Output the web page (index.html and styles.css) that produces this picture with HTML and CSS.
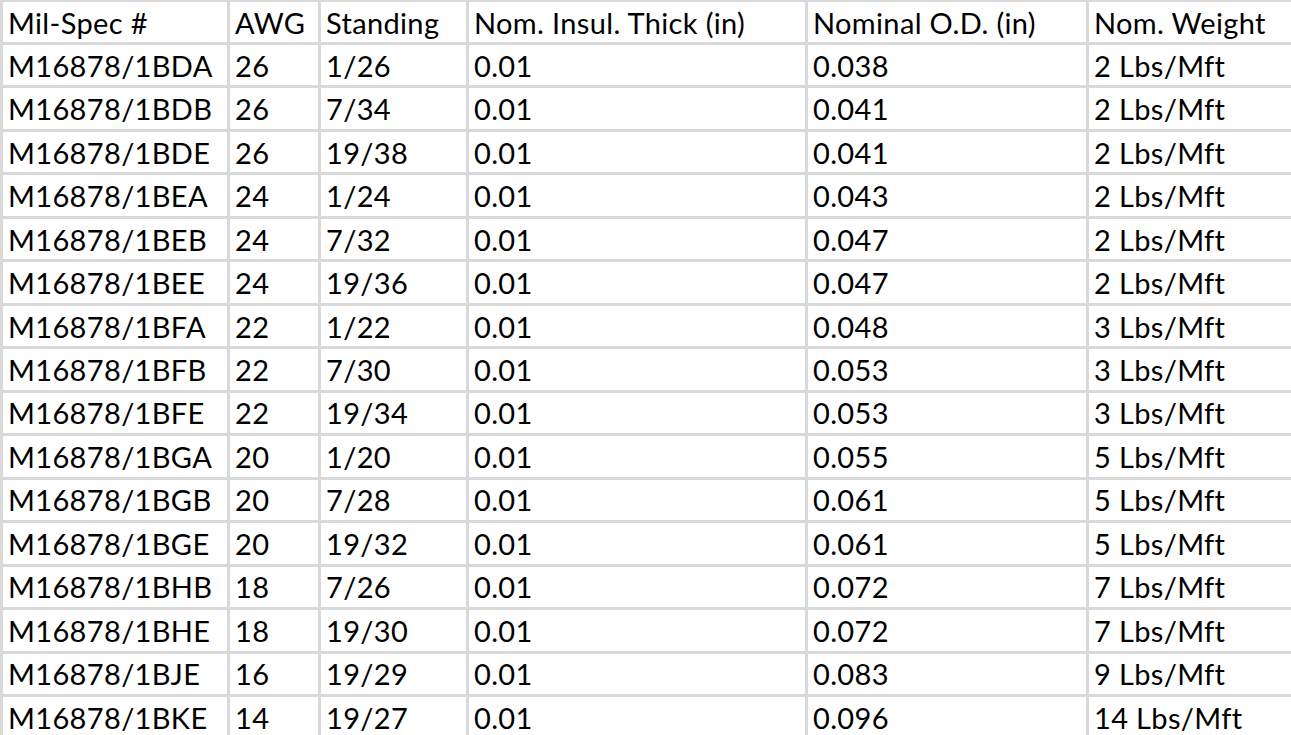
FILE: index.html
```html
<!DOCTYPE html>
<html>
<head>
<meta charset="utf-8">
<link rel="stylesheet" href="styles.css">
</head>
<body>
<div class="sheet">
  <div class="c">Mil-Spec #</div><div class="c">AWG</div><div class="c">Standing</div><div class="c">Nom. Insul. Thick (in)</div><div class="c">Nominal O.D. (in)</div><div class="c">Nom. Weight</div>
  <div class="c">M16878/1BDA</div><div class="c">26</div><div class="c">1/26</div><div class="c">0.01</div><div class="c">0.038</div><div class="c">2 Lbs/Mft</div>
  <div class="c">M16878/1BDB</div><div class="c">26</div><div class="c">7/34</div><div class="c">0.01</div><div class="c">0.041</div><div class="c">2 Lbs/Mft</div>
  <div class="c">M16878/1BDE</div><div class="c">26</div><div class="c">19/38</div><div class="c">0.01</div><div class="c">0.041</div><div class="c">2 Lbs/Mft</div>
  <div class="c">M16878/1BEA</div><div class="c">24</div><div class="c">1/24</div><div class="c">0.01</div><div class="c">0.043</div><div class="c">2 Lbs/Mft</div>
  <div class="c">M16878/1BEB</div><div class="c">24</div><div class="c">7/32</div><div class="c">0.01</div><div class="c">0.047</div><div class="c">2 Lbs/Mft</div>
  <div class="c">M16878/1BEE</div><div class="c">24</div><div class="c">19/36</div><div class="c">0.01</div><div class="c">0.047</div><div class="c">2 Lbs/Mft</div>
  <div class="c">M16878/1BFA</div><div class="c">22</div><div class="c">1/22</div><div class="c">0.01</div><div class="c">0.048</div><div class="c">3 Lbs/Mft</div>
  <div class="c">M16878/1BFB</div><div class="c">22</div><div class="c">7/30</div><div class="c">0.01</div><div class="c">0.053</div><div class="c">3 Lbs/Mft</div>
  <div class="c">M16878/1BFE</div><div class="c">22</div><div class="c">19/34</div><div class="c">0.01</div><div class="c">0.053</div><div class="c">3 Lbs/Mft</div>
  <div class="c">M16878/1BGA</div><div class="c">20</div><div class="c">1/20</div><div class="c">0.01</div><div class="c">0.055</div><div class="c">5 Lbs/Mft</div>
  <div class="c">M16878/1BGB</div><div class="c">20</div><div class="c">7/28</div><div class="c">0.01</div><div class="c">0.061</div><div class="c">5 Lbs/Mft</div>
  <div class="c">M16878/1BGE</div><div class="c">20</div><div class="c">19/32</div><div class="c">0.01</div><div class="c">0.061</div><div class="c">5 Lbs/Mft</div>
  <div class="c">M16878/1BHB</div><div class="c">18</div><div class="c">7/26</div><div class="c">0.01</div><div class="c">0.072</div><div class="c">7 Lbs/Mft</div>
  <div class="c">M16878/1BHE</div><div class="c">18</div><div class="c">19/30</div><div class="c">0.01</div><div class="c">0.072</div><div class="c">7 Lbs/Mft</div>
  <div class="c">M16878/1BJE</div><div class="c">16</div><div class="c">19/29</div><div class="c">0.01</div><div class="c">0.083</div><div class="c">9 Lbs/Mft</div>
  <div class="c">M16878/1BKE</div><div class="c">14</div><div class="c">19/27</div><div class="c">0.01</div><div class="c">0.096</div><div class="c">14 Lbs/Mft</div>
</div>
</body>
</html>
```
FILE: styles.css
```css
html, body {
  margin: 0;
  padding: 0;
  background: #ffffff;
  overflow: hidden;
}
.sheet {
  display: grid;
  grid-template-columns: 224px 88px 145px 336px 278px 1fr;
  grid-template-rows: 40px repeat(16, 40.47px);
  gap: 3px;
  padding: 2px 0 0 3px;
  background: #d9d9d9;
  width: 1291px;
  box-sizing: border-box;
  font-family: Lato, "Open Sans", sans-serif;
  font-size: 29px;
  letter-spacing: 0.35px;
  color: #000000;
}
.c {
  background: #ffffff;
  padding-left: 5px;
  display: flex;
  align-items: center;
  white-space: nowrap;
  overflow: hidden;
  line-height: 1;
}
```
